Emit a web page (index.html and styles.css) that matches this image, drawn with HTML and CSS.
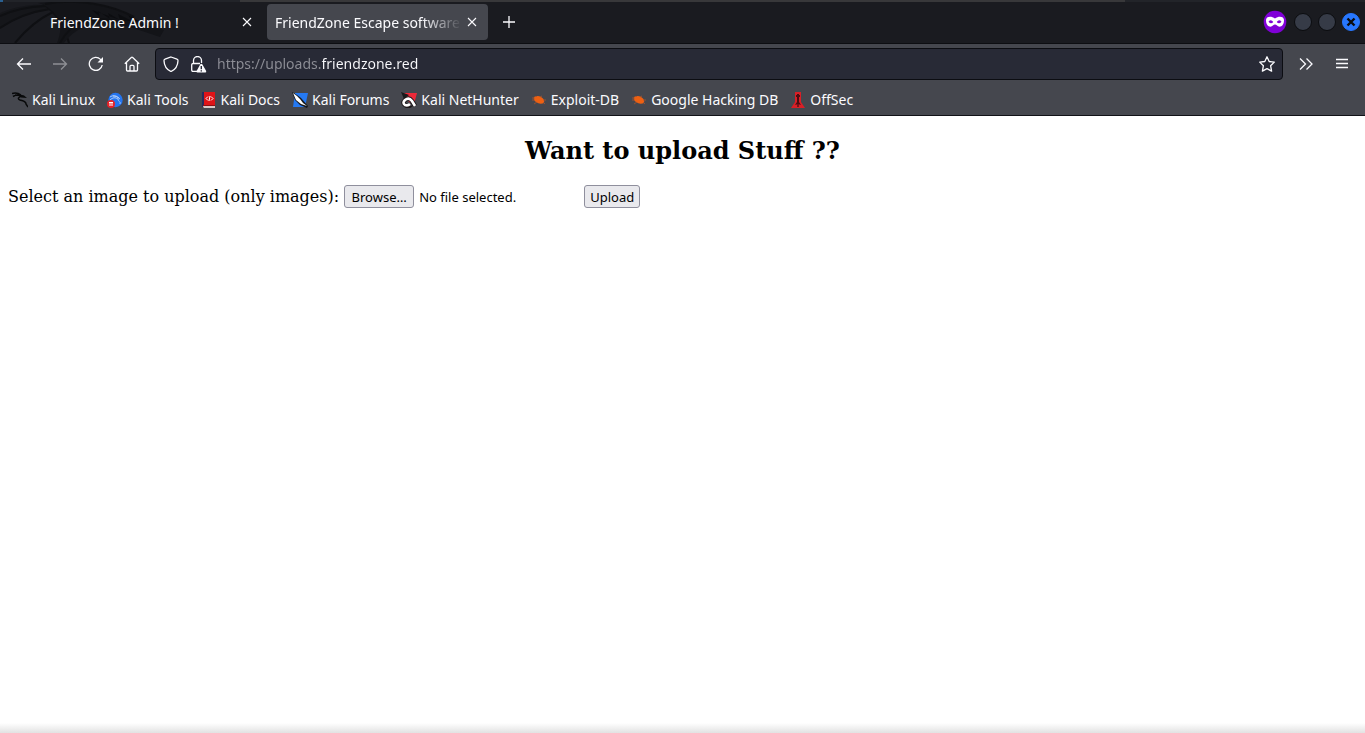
FILE: index.html
```html
<!DOCTYPE html>
<html lang="en">
<head>
<meta charset="utf-8">
<title>FriendZone Escape software</title>
<link rel="stylesheet" href="styles.css">
</head>
<body>
<div class="window">
  <header class="browser">
    <div class="tabbar">
      <svg class="dragon" width="240" height="43" viewBox="0 0 240 43" aria-hidden="true">
        <path d="M0 13C16 6 34 4 46 5L52 9C30 13 13 19 0 29Z" fill="#15161a"/>
        <path d="M0 16Q20 7 45 6M0 28Q22 13 50 9M15 43Q32 22 53 12M43 4Q62 17 69 43" fill="none" stroke="#0f1013" stroke-width="2"/>
        <path d="M38 3C85 -1 119 8 136 19L140 23 164 30 160 37 139 30C110 20 82 19 64 43H57C64 25 60 15 44 5Z" fill="#131418"/>
        <path d="M92 10L100 17 98 11 110 19 108 13 120 20 118 14 132 21 128 15 140 22L120 20Z" fill="#0c0d10"/>
        <path d="M45 4C78 -2 112 5 134 17M60 43C73 19 93 16 117 21" fill="none" stroke="#0f1013" stroke-width="2"/>
      </svg>
      <div class="desktop-edge" aria-hidden="true"></div>
      <div class="tab tab-first">
        <span class="tab-title">FriendZone Admin !</span>
        <button class="tab-close" aria-label="Close tab"><svg width="10" height="10" viewBox="0 0 10 10"><path d="M1 1l8 8M9 1L1 9"/></svg></button>
      </div>
      <div class="tab tab-active">
        <span class="tab-title">FriendZone Escape software</span>
        <button class="tab-close" aria-label="Close tab"><svg width="10" height="10" viewBox="0 0 10 10"><path d="M1 1l8 8M9 1L1 9"/></svg></button>
      </div>
      <button class="new-tab" aria-label="New tab"><svg width="14" height="14" viewBox="0 0 14 14"><path d="M7 1v12M1 7h12"/></svg></button>
      <div class="window-controls">
        <svg class="mask" width="24" height="24" viewBox="0 0 24 24" role="img" aria-label="Private browsing"><circle cx="12" cy="12" r="11.3" fill="#8000d7"/><path fill="#fff" fill-rule="evenodd" d="M3 10C3 6.500 8 5.500 12 8.400C16 5.500 21 6.500 21 10C21 14.500 19 16.700 16.500 16.700C14.500 16.700 13.500 14.500 12 14.500S9.500 16.700 7.500 16.700C5 16.700 3 14.500 3 10ZM5.500 11.700Q8 14.800 10.300 12Q8 8.800 5.500 11.700ZM13.700 12Q16 14.800 18.500 11.700Q16 8.800 13.700 12Z"/></svg>
        <button class="wm" aria-label="Minimize"></button>
        <button class="wm" aria-label="Maximize"></button>
        <button class="wm wm-close" aria-label="Close window"><svg width="10" height="10" viewBox="0 0 10 10"><path d="M1.500 1.500l7 7M8.500 1.500l-7 7"/></svg></button>
      </div>
    </div>
    <nav class="navbar">
      <button class="tool" aria-label="Back"><svg width="16" height="16" viewBox="0 0 16 16"><path d="M7 2.500L1.500 8 7 13.500M2 8h13"/></svg></button>
      <button class="tool tool-off" aria-label="Forward" disabled><svg width="16" height="16" viewBox="0 0 16 16"><path d="M9 2.500L14.500 8 9 13.500M14 8H1"/></svg></button>
      <button class="tool" aria-label="Reload"><svg width="16" height="16" viewBox="0 0 16 16"><path d="M14.200 9A6.500 6.500 0 1 1 12.500 3.400L14 5"/><path class="solid" d="M15 1v5.500H9.500z"/></svg></button>
      <button class="tool" aria-label="Home"><svg width="16" height="16" viewBox="0 0 16 16"><path d="M.8 7.700L7.300 1.500Q8 .9 8.700 1.500L15.200 7.700M2.500 6.500V14Q2.500 15 3.500 15H12.500Q13.500 15 13.500 14V6.500M6 15V10.500Q6 9.300 7 9.300H9Q10 9.300 10 10.500V15"/></svg></button>
      <div class="urlbar">
        <svg class="line" width="16" height="16" viewBox="0 0 16 16" aria-hidden="true"><path d="M8 1L14 3.200Q15 3.500 15 4.700C14.800 10 12.500 13.500 8 15.500C3.500 13.500 1.200 10 1 4.700Q1 3.500 2 3.200Z"/></svg>
        <svg class="line lock" width="17" height="17" viewBox="0 0 17 17" aria-hidden="true"><path d="M3.500 7.500V4.500a4 4 0 0 1 8 0V7M7 15.300H3Q1.700 15.300 1.700 14V9Q1.700 7.500 3 7.500H10"/><path class="solid" fill-rule="evenodd" d="M10.300 8.300Q11.300 7 12.300 8.300L16.200 15Q16.500 16.500 15.200 16.500H7.500Q6.200 16.500 6.600 15ZM10.600 10V13.200H12V10ZM10.600 14.200V15.500H12V14.200Z"/></svg>
        <input class="url" type="text" value="https://uploads.friendzone.red" aria-label="Address" spellcheck="false">
        <button class="star" aria-label="Bookmark this page"><svg class="line" width="16" height="16" viewBox="0 0 16 16"><path d="M8 .8L10.200 5.500 15.300 6.100 11.600 9.700 12.600 15.100 8 12.600 3.400 15.100 4.400 9.700 .7 6.100 5.800 5.500Z" stroke-linejoin="round"/></svg></button>
      </div>
      <button class="tool more" aria-label="More tools"><svg width="16" height="16" viewBox="0 0 16 16"><path d="M2 2.500L7.500 8 2 13.500M8.500 2.500L14 8 8.500 13.500"/></svg></button>
      <button class="tool" aria-label="Menu"><svg width="14" height="14" viewBox="0 0 14 14"><path d="M1 2.500h12M1 6.500h12M1 10.500h12"/></svg></button>
    </nav>
    <nav class="bookmarks" aria-label="Bookmarks">
      <a href="#"><svg width="16" height="16" viewBox="0 0 16 16"><path d="M0 1.500Q5 0 9 3M1 4.500Q5 2 10 4Q4 6 8 8C11 9 14 9 14 12L16 15M3 3L8 3.500" fill="none" stroke="#08090a" stroke-width="1.500"/><path d="M8 3L12 3.500 15 6 9 5.500Z" fill="#08090a"/></svg>Kali Linux</a>
      <a href="#"><svg width="16" height="16" viewBox="0 0 16 16"><circle cx="8.500" cy="8" r="7.200" fill="#2475f0"/><path d="M3 5Q7 2 12 6M3 8Q7 4 11 7C11 10 14 9 13 12M6 4Q9 3 13 7" fill="none" stroke="#b9d3f8" stroke-width=".9"/><circle cx="4" cy="12" r="4" fill="#e52128"/><path d="M2 10.500H6M3 10.500V14M5 10.500V14" stroke="#fff" fill="none"/></svg>Kali Tools</a>
      <a href="#"><svg width="16" height="16" viewBox="0 0 16 16"><path d="M2 0H14V14H2Z" fill="#df1418"/><path d="M1 0H3V15H1Z" fill="#272c5c"/><path d="M2 14H14V16H3Q2 15 2 14Z" fill="#d9c8c8"/><path d="M2 13H14V14H2Z" fill="#8e1014"/><path d="M7 4.500L5 6.500 7 8.500M10 4.500L12 6.500 10 8.500M9 4L8 9" fill="none" stroke="#fff"/></svg>Kali Docs</a>
      <a href="#"><svg width="16" height="16" viewBox="0 0 16 16"><path d="M3 1H16L13 15H1Z" fill="#2579f2"/><path d="M0 0L5 3 9 6 16 14 15 16 8 13 3 8Z" fill="#15181c"/><path d="M1 1L5 4 8 7 11 11 15 14 9 12 4 8Z" fill="#fff"/></svg>Kali Forums</a>
      <a href="#"><svg width="16" height="16" viewBox="0 0 16 16"><path d="M3 1H16L13 12 8 10Z" fill="#ed2939"/><path d="M0 0L8 3 3 7Z" fill="#191a1c"/><path d="M14 14L11 9Q8 5 4 8Q1 11 4 13Q7 15 10 13" fill="none" stroke="#1c1719" stroke-width="4.500"/><path d="M14 14L11 9Q8 5 4 8Q1 11 4 13Q7 14 9 12" fill="none" stroke="#fff" stroke-width="2.600"/></svg>Kali NetHunter</a>
      <a href="#"><svg width="16" height="16" viewBox="0 0 16 16"><path d="M3 5Q7 3 10 5Q14 7 13 11Q9 13 5 10Q2 8 3 5Z" fill="#ed6012"/><path d="M1 6L4 6M5 4L6 5M9 5L11 4M12 8L15 8M12 10L14 12M6 10L3 12M4 8L1 8" stroke="#a9542d" stroke-width=".8" fill="none"/></svg>Exploit-DB</a>
      <a href="#"><svg width="16" height="16" viewBox="0 0 16 16"><path d="M3 5Q7 3 10 5Q14 7 13 11Q9 13 5 10Q2 8 3 5Z" fill="#ed6012"/><path d="M1 6L4 6M5 4L6 5M9 5L11 4M12 8L15 8M12 10L14 12M6 10L3 12M4 8L1 8" stroke="#a9542d" stroke-width=".8" fill="none"/></svg>Google Hacking DB</a>
      <a href="#"><svg width="16" height="16" viewBox="0 0 16 16"><path d="M5 0H11V10L15 16H1L5 10Z" fill="#d91f26"/><path d="M7 2H9V10L11 13 8 12 5 13 7 10Z" fill="#4a0d12"/><path d="M6 3H10V5H6ZM7.300 10H8.700V15H7.300Z" fill="#510d13"/></svg>OffSec</a>
    </nav>
  </header>
  <main class="page">
    <h2 class="heading">Want to upload Stuff ??</h2>
    <form class="upload">
      <label for="browse">Select an image to upload (only images):</label>
      <button class="push push-browse" id="browse" type="button">Browse…</button>
      <output class="filename" for="browse">No file selected.</output>
      <button class="push" type="button">Upload</button>
    </form>
  </main>
</div>
</body>
</html>
```
FILE: styles.css
```css
* {
  box-sizing: border-box;
}

body {
  margin: 0;
  background: #fff;
}

.window {
  display: flex;
  flex-direction: column;
  min-height: 100vh;
}

.browser {
  font: 14px/20px "Noto Sans", sans-serif;
  color: #fbfbfe;
  background: #45474e;
  border-bottom: 1px solid #111217;
}

.browser button {
  display: flex;
  align-items: center;
  justify-content: center;
  flex: none;
  padding: 0;
  border: 0;
  background: none;
  color: inherit;
}

.browser button svg,
.line {
  fill: none;
  stroke: #fbfbfe;
  stroke-width: 1.3;
  flex: none;
}

.browser .solid {
  fill: #fbfbfe;
  stroke: none;
}

.tabbar {
  position: relative;
  display: flex;
  align-items: center;
  height: 44px;
  background: #1a1b20;
  border-bottom: 1px solid #0d0e12;
}

.dragon {
  position: absolute;
  left: 0;
  top: 0;
}

.desktop-edge {
  position: absolute;
  inset: 0 0 auto 0;
  height: 2px;
  background: linear-gradient(90deg, #2a5f8f 0 3px, #222429 3px 240px, #38383a 240px 1125px, #222429 1125px);
}

.tab {
  position: relative;
  display: flex;
  align-items: center;
  height: 36px;
  border-radius: 4px;
}

.tab-first {
  width: 225px;
  margin-left: 38px;
  padding: 0 11px 0 12px;
}

.tab-active {
  width: 221px;
  margin-left: 4px;
  padding: 0 11px 0 8px;
  background: #45474e;
}

.tab-title {
  flex: 1;
  min-width: 0;
  padding-top: 2px;
  white-space: nowrap;
}

.tab-active .tab-title {
  mask-image: linear-gradient(90deg, #000 calc(100% - 40px), transparent);
}

.tab-close {
  width: 10px;
  margin-left: 5px;
}

.browser .tab-close svg {
  stroke-width: 1.1;
}

.new-tab {
  width: 28px;
  height: 32px;
  margin-left: 7px;
}

.window-controls {
  display: flex;
  align-items: center;
  gap: 6px;
  margin-left: auto;
  padding-right: 5px;
}

.mask {
  margin-right: 1px;
}

.browser .wm {
  width: 18px;
  height: 18px;
  border: 1px solid #0b0c0f;
  border-radius: 50%;
  background: #363b47;
}

.browser .wm-close {
  border-color: #2777ff;
  background: #2777ff;
}

.browser .wm-close svg {
  stroke: #0b0c0f;
  stroke-width: 2.4;
}

.navbar {
  display: flex;
  align-items: center;
  gap: 4px;
  height: 40px;
  padding: 0 7px 0 8px;
}

.tool {
  width: 32px;
  height: 32px;
}

.tool-off {
  opacity: .4;
}

.urlbar {
  display: flex;
  align-items: center;
  flex: 1;
  height: 32px;
  margin-left: 3px;
  padding: 0 7px;
  border: 1px solid #0c0d12;
  border-radius: 4px;
  background: #282a36;
}

.lock {
  margin-left: 11px;
}

.url {
  flex: 1;
  min-width: 0;
  margin-left: 10px;
  padding: 0;
  border: 0;
  outline: 0;
  font: 14px/20px "Noto Sans", sans-serif;
  color: transparent;
  background: linear-gradient(90deg, #8d8e96 105px, #fbfbfe 105px);
  background-clip: text;
  -webkit-background-clip: text;
}

.more {
  margin-left: 3px;
}

.bookmarks {
  display: flex;
  align-items: center;
  gap: 12px;
  height: 31px;
  padding: 0 12px;
}

.bookmarks a {
  display: flex;
  align-items: center;
  gap: 4px;
  color: inherit;
  text-decoration: none;
  white-space: nowrap;
}

.page {
  flex: 1;
  padding: 0 8px;
  font: 16px/19px "DejaVu Serif", serif;
  color: #000;
  background: linear-gradient(0deg, #e2e2e2, #fff 10px);
}

.heading {
  margin: 20px 0;
  font-size: 24px;
  line-height: 29px;
  text-align: center;
}

.upload {
  display: flex;
  align-items: center;
  gap: 5px;
}

.push {
  height: 23px;
  padding: 1px 5px 0;
  border: 1px solid #8f8f9d;
  border-radius: 3px;
  background: #e9e9ed;
  color: #000;
  font: 13px/19px "Noto Sans", sans-serif;
}

.push-browse {
  width: 70px;
}

.filename {
  width: 160px;
  padding-top: 1px;
  font: 13px/19px "Noto Sans", sans-serif;
}
```
